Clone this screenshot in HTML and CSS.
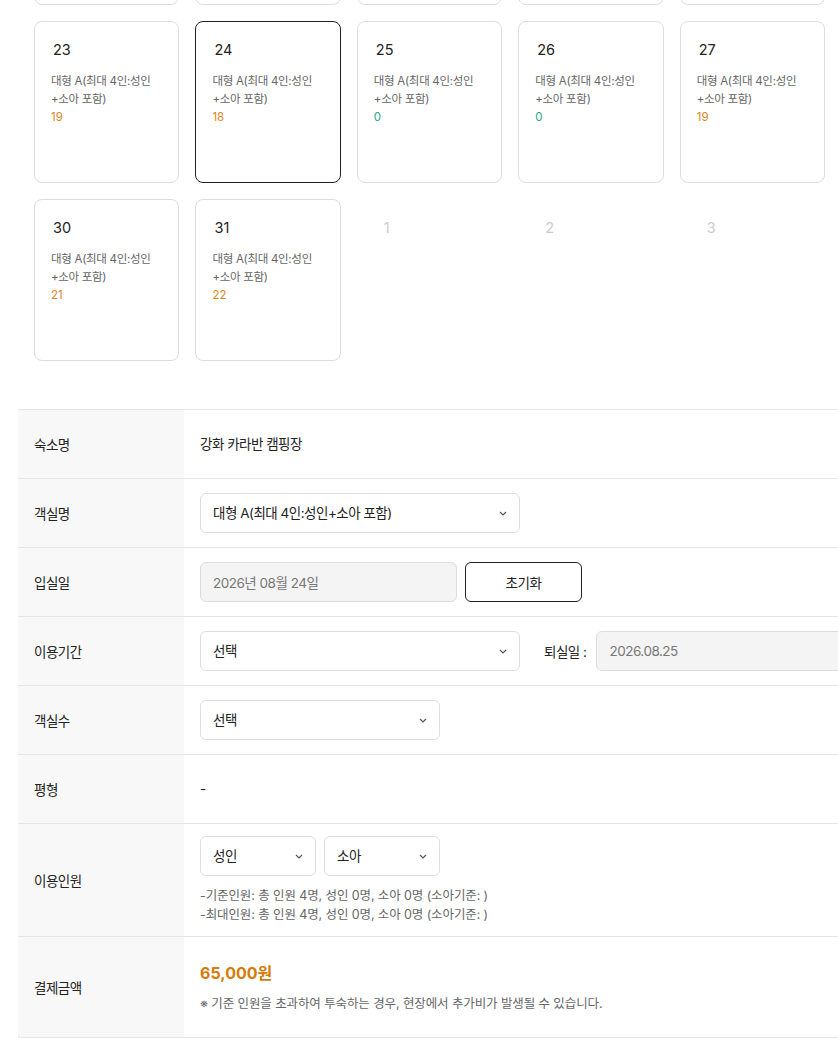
FILE: index.html
```html
<!DOCTYPE html>
<html lang="ko">
<head>
    <meta charset="UTF-8">
    <meta name="viewport" content="width=device-width, initial-scale=1.0">
    <title>객실 예약</title>
    <link rel="stylesheet" href="styles.css">
</head>
<body>

<div class="page">

    <div class="calendar">
        <div class="day"></div>
        <div class="day"></div>
        <div class="day"></div>
        <div class="day"></div>
        <div class="day"></div>
        <div class="day"></div>
        <div class="day"></div>

        <div class="day"><span class="day-num">23</span><p class="room">대형 A(최대 4인:성인+소아 포함)</p><span class="left">19</span></div>
        <div class="day selected"><span class="day-num">24</span><p class="room">대형 A(최대 4인:성인+소아 포함)</p><span class="left">18</span></div>
        <div class="day"><span class="day-num">25</span><p class="room">대형 A(최대 4인:성인+소아 포함)</p><span class="left soldout">0</span></div>
        <div class="day"><span class="day-num">26</span><p class="room">대형 A(최대 4인:성인+소아 포함)</p><span class="left soldout">0</span></div>
        <div class="day"><span class="day-num">27</span><p class="room">대형 A(최대 4인:성인+소아 포함)</p><span class="left">19</span></div>
        <div class="day"></div>
        <div class="day"></div>

        <div class="day"><span class="day-num">30</span><p class="room">대형 A(최대 4인:성인+소아 포함)</p><span class="left">21</span></div>
        <div class="day"><span class="day-num">31</span><p class="room">대형 A(최대 4인:성인+소아 포함)</p><span class="left">22</span></div>
        <div class="day other"><span class="day-num">1</span></div>
        <div class="day other"><span class="day-num">2</span></div>
        <div class="day other"><span class="day-num">3</span></div>
        <div class="day other"></div>
        <div class="day other"></div>
    </div>

    <!-- 예약 정보 -->
    <table class="booking">
        <tr>
            <th>숙소명</th>
            <td><div class="value">강화 카라반 캠핑장</div></td>
        </tr>
        <tr>
            <th>객실명</th>
            <td>
                <div class="select-box w320">
                    <select><option>대형 A(최대 4인:성인+소아 포함)</option></select>
                    <svg class="chevron" width="8" height="5" viewBox="0 0 8 5"><path d="M1 1l3 3 3-3" fill="none" stroke="#555" stroke-width="1.2"/></svg>
                </div>
            </td>
        </tr>
        <tr>
            <th>입실일</th>
            <td>
                <div class="field-row">
                    <input type="text" class="readonly-input" value="2026년 08월 24일" readonly>
                    <button class="reset-btn">초기화</button>
                </div>
            </td>
        </tr>
        <tr>
            <th>이용기간</th>
            <td>
                <div class="field-row">
                    <div class="select-box w320">
                        <select><option>선택</option></select>
                        <svg class="chevron" width="8" height="5" viewBox="0 0 8 5"><path d="M1 1l3 3 3-3" fill="none" stroke="#555" stroke-width="1.2"/></svg>
                    </div>
                    <span class="checkout-label">퇴실일 :</span>
                    <input type="text" class="readonly-input" value="2026.08.25" readonly>
                </div>
            </td>
        </tr>
        <tr>
            <th>객실수</th>
            <td>
                <div class="select-box w240">
                    <select><option>선택</option></select>
                    <svg class="chevron" width="8" height="5" viewBox="0 0 8 5"><path d="M1 1l3 3 3-3" fill="none" stroke="#555" stroke-width="1.2"/></svg>
                </div>
            </td>
        </tr>
        <tr>
            <th>평형</th>
            <td><div class="value">-</div></td>
        </tr>
        <tr class="people-row">
            <th>이용인원</th>
            <td>
                <div class="field-row">
                    <div class="select-box w116">
                        <select><option>성인</option></select>
                        <svg class="chevron" width="8" height="5" viewBox="0 0 8 5"><path d="M1 1l3 3 3-3" fill="none" stroke="#555" stroke-width="1.2"/></svg>
                    </div>
                    <div class="select-box w116">
                        <select><option>소아</option></select>
                        <svg class="chevron" width="8" height="5" viewBox="0 0 8 5"><path d="M1 1l3 3 3-3" fill="none" stroke="#555" stroke-width="1.2"/></svg>
                    </div>
                </div>
                <p class="people-info">-기준인원: 총 인원 4명, 성인 0명, 소아 0명 (소아기준: )<br>-최대인원: 총 인원 4명, 성인 0명, 소아 0명 (소아기준: )</p>
            </td>
        </tr>
        <tr class="price-row">
            <th>결제금액</th>
            <td>
                <div class="price">65,000원</div>
                <p class="notice">※ 기준 인원을 초과하여 투숙하는 경우, 현장에서 추가비가 발생될 수 있습니다.</p>
            </td>
        </tr>
    </table>

</div>

</body>
</html>
```

FILE: styles.css
```css
body {
    margin: 0;
    font-family: "Inter", "Noto Sans CJK KR", sans-serif;
    color: #222;
    background: #fff;
    overflow: hidden;
}
.page {
    width: 1146px;
    margin-left: 18px;
}
/* 달력 */
.calendar {
    display: grid;
    grid-template-columns: repeat(7, 1fr);
    gap: 16px;
    padding: 0 16px;
    margin-top: -157px;
}
.day {
    height: 162px;
    box-sizing: border-box;
    border: 1px solid #ddd;
    border-radius: 8px;
    padding: 15px 16px;
}
.day.selected {
    border-color: #222;
}
.day.other {
    border-color: transparent;
    padding-left: 24px;
}
.day-num {
    display: block;
    font-size: 14.5px;
    line-height: 26px;
    padding-left: 2px;
}
.day.other .day-num {
    color: #ccc;
}
.room {
    margin: 9px 0 0;
    font-size: 11.5px;
    line-height: 18px;
    letter-spacing: -0.3px;
    color: #666;
}
.left {
    display: block;
    font-size: 11.5px;
    line-height: 18px;
    color: #de8522;
}
.left.soldout {
    color: #2ba38d;
}
/* 예약 정보 테이블 */
.booking {
    width: 100%;
    margin-top: 48px;
    border-collapse: collapse;
    border-top: 1px solid #e6e6e6;
    font-size: 13.5px;
    letter-spacing: -0.5px;
}
.booking tr {
    border-bottom: 1px solid #e6e6e6;
}
.booking th {
    width: 134px;
    padding: 0 16px;
    background: #f8f8f8;
    text-align: left;
    font-weight: 400;
}
.booking td {
    padding: 14px 16px;
}
.value {
    line-height: 40px;
}
.field-row {
    display: flex;
    align-items: center;
    gap: 8px;
}
.select-box {
    position: relative;
    height: 40px;
}
.w320 { width: 320px; }
.w240 { width: 240px; }
.w116 { width: 116px; }
select, input, button {
    font-family: inherit;
    font-size: 13.5px;
    letter-spacing: -0.5px;
}
select {
    appearance: none;
    width: 100%;
    height: 40px;
    padding: 0 30px 0 12px;
    border: 1px solid #ddd;
    border-radius: 6px;
    background: #fff;
    color: #222;
    outline: none;
}
.chevron {
    position: absolute;
    right: 13px;
    top: 18px;
    pointer-events: none;
}
.readonly-input {
    width: 257px;
    height: 40px;
    box-sizing: border-box;
    padding: 0 12px;
    border: 1px solid #ddd;
    border-radius: 6px;
    background: #f4f4f4;
    color: #777;
    outline: none;
}
.reset-btn {
    width: 117px;
    height: 40px;
    border: 1px solid #222;
    border-radius: 6px;
    background: #fff;
    color: #222;
    cursor: pointer;
}
.checkout-label {
    margin: 0 2px 0 16px;
}
.people-row td {
    padding: 12px 16px;
}
.people-info {
    margin: 10px 0 0;
    font-size: 12.5px;
    line-height: 19px;
    letter-spacing: -0.1px;
    color: #666;
}
.price-row td {
    padding: 24px 16px;
}
.price {
    font-size: 16px;
    line-height: 24px;
    font-weight: 700;
    letter-spacing: 0;
    color: #d67a06;
}
.notice {
    margin: 10px 0 0;
    font-size: 12.5px;
    line-height: 18px;
    letter-spacing: -0.1px;
    color: #666;
}
```
